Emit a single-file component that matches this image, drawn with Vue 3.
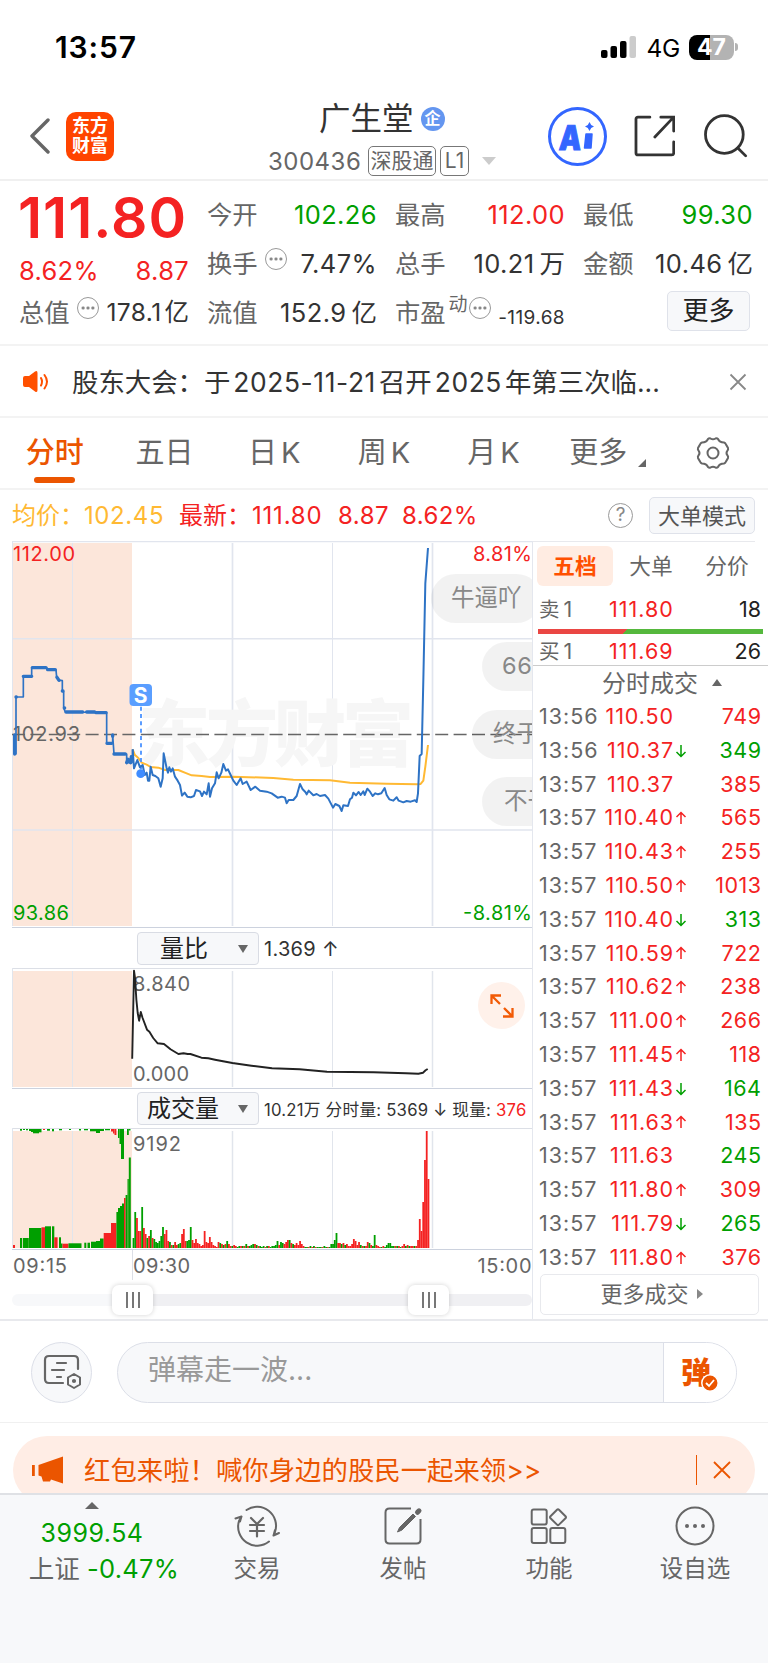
<template>
  <div class="stock-page">
    <!-- 状态栏 -->
    <div class="status-bar">
      <span class="clock">13:57</span>
      <div class="status-right">
        <svg class="signal" width="36" height="24" viewBox="0 0 36 24">
          <rect x="0" y="15" width="6.5" height="8" rx="2" fill="#000" />
          <rect x="9.5" y="11" width="6.5" height="12" rx="2" fill="#000" />
          <rect x="19" y="6" width="6.5" height="17" rx="2" fill="#000" />
          <rect x="28.5" y="1" width="6.5" height="22" rx="2" fill="#ccc" />
        </svg>
        <span class="network">4G</span>
        <div class="battery"><span>4</span><span>7</span></div>
        <div class="battery-nub"></div>
      </div>
    </div>

    <!-- 标题栏 -->
    <div class="nav-bar">
      <div class="nav-left">
        <svg width="22" height="36" viewBox="0 0 22 36">
          <path d="M20 2 L4 18 L20 34" fill="none" stroke="#666" stroke-width="3.4" stroke-linecap="round" stroke-linejoin="round" />
        </svg>
        <div class="logo"><span>东方</span><span>财富</span></div>
      </div>
      <div class="nav-title">
        <div class="name-row">
          <span class="stock-name">广生堂</span>
          <span class="corp-badge">企</span>
        </div>
        <div class="code-row">
          <span class="stock-code">300436</span>
          <span class="code-tag">深股通</span>
          <span class="code-tag l1">L1</span>
          <span class="down-arrow"></span>
        </div>
      </div>
      <div class="nav-actions">
        <div class="ai-btn">
          <span>A</span>
          <svg width="12" height="28" viewBox="0 0 12 28">
            <path d="M6.5 0 L8.2 3 L11 4.5 L8.2 6 L6.5 9 L4.8 6 L2 4.5 L4.8 3 Z" fill="#3366ff" />
            <path d="M3 12 L9 12 L8 26 L1.5 26 Z" fill="#3366ff" stroke="#3366ff" stroke-width="1.5" stroke-linejoin="round" />
          </svg>
        </div>
        <svg class="share" width="42" height="42" viewBox="0 0 42 42" fill="none" stroke="#333" stroke-width="2.8" stroke-linecap="round">
          <path d="M16 2 H4 Q2 2 2 4 V38 Q2 40 4 40 H38 Q40 40 40 38 V27" />
          <path d="M27 2 H40 V16 M39 3 L21 22" />
        </svg>
        <svg class="search" width="44" height="44" viewBox="0 0 44 44" fill="none" stroke="#333" stroke-width="2.8" stroke-linecap="round">
          <circle cx="20.5" cy="20.5" r="19" />
          <path d="M34 34 L42 42" />
        </svg>
      </div>
    </div>

    <!-- 行情 -->
    <div class="quote">
      <div class="price-block">
        <div class="big-price">111.80</div>
        <div class="change-row"><span>8.62%</span><span>8.87</span></div>
      </div>
      <div v-for="item in quoteItems" :key="item.label" class="quote-cell" :class="item.cls">
        <span class="quote-label">{{ item.label }}</span>
        <sup v-if="item.sup">{{ item.sup }}</sup>
        <i v-if="item.tip" class="tip-dot"></i>
        <span class="quote-value" :class="item.color">{{ item.value }}<em v-if="item.unit">{{ item.unit }}</em></span>
      </div>
      <div class="quote-cell quote-more"><button class="more-btn">更多</button></div>
    </div>

    <!-- 公告 -->
    <div class="notice">
      <svg width="28" height="24" viewBox="0 0 28 24">
        <path d="M1 8 Q1 6 3 6 H7 L13 1.5 Q15.5 0 15.5 3 V20 Q15.5 23 13 21.5 L7 17 H3 Q1 17 1 15 Z" fill="#ff5000" />
        <path d="M19 8 Q21 11.5 19 15.5 M22.500 5 Q27.5 11.5 22.5 18.500" fill="none" stroke="#ff5000" stroke-width="2" stroke-linecap="round" />
      </svg>
      <span class="notice-text">股东大会：于<em>2025-11-21</em>召开<em>2025</em>年第三次临...</span>
      <svg width="18" height="18" viewBox="0 0 18 18"><path d="M1.5 1.5 L16.5 16.5 M16.5 1.5 L1.5 16.5" stroke="#888" stroke-width="1.8" /></svg>
    </div>

    <!-- 周期切换 -->
    <div class="tabs">
      <div v-for="tab in tabs" :key="tab.name" class="tab" :class="{ active: tab.name === activeTab, last: tab.more }" @click="activeTab = tab.name">
        {{ tab.name }}<em v-if="tab.k">K</em><span v-if="tab.more" class="corner"></span>
      </div>
      <svg class="gear" width="34" height="34" viewBox="0 0 34 34" fill="none" stroke="#666" stroke-width="2">
        <path d="M12 3 Q13 2 14.5 2.5 Q17 4 19.5 2.5 Q21 2 22 3 Q23.5 6.5 28 6.5 Q29.5 7 30 8.5 L32 12 Q32.5 13.5 31.5 14.5 Q29.5 17 31.5 19.5 Q32.5 20.5 32 22 L30 25.5 Q29.5 27 28 27.5 Q23.5 27.5 22 31 Q21 32 19.5 31.5 Q17 30 14.5 31.5 Q13 32 12 31 Q10.5 27.5 6 27.5 Q4.5 27 4 25.5 L2 22 Q1.5 20.5 2.5 19.5 Q4.5 17 2.5 14.5 Q1.5 13.5 2 12 L4 8.5 Q4.5 7 6 6.5 Q10.5 6.5 12 3 Z" />
        <circle cx="17" cy="17" r="5.5" />
      </svg>
    </div>

    <div class="avg-bar">
      <span class="avg">均价：</span><span class="avg num-avg">102.45</span>
      <span class="latest">最新：</span><span class="latest n1">111.80</span><span class="latest n2">8.87</span><span class="latest n3">8.62%</span>
      <span class="help">?</span>
      <button class="mode-btn">大单模式</button>
    </div>

    <div class="main">
      <!-- 左侧图表 -->
      <div class="charts">
        <div class="price-chart">
          <svg width="520" height="387" viewBox="0 0 520 387">
            <rect x="0" y="2" width="120" height="383" fill="#fce6da" />
            <g stroke="#e1e5ee">
              <path d="M0 0.5 H520" stroke-width="1.5" />
              <path d="M0.5 0 V385 M60.500 2 V385" stroke-width="1" />
              <path d="M220.5 2 V385 M420.5 2 V385" stroke-width="1.7" />
              <path d="M320.5 2 V385" stroke-width="1" />
              <path d="M0 97.7 H520 M0 289 H520" stroke-width="1.6" />
            </g>
            <text x="126" y="219" class="watermark" textLength="276">东方财富</text>
            <path d="M0 193.5 H520" stroke="#666" stroke-width="1.3" stroke-dasharray="13 5.4" />
            <text x="1" y="20" class="axis red" textLength="62">112.00</text>
            <text x="520" y="20" class="axis red" text-anchor="end" textLength="59">8.81%</text>
            <text x="1" y="199.5" class="axis grey" textLength="67">102.93</text>
            <text x="1" y="379" class="axis green" textLength="56">93.86</text>
            <text x="520" y="379" class="axis green" text-anchor="end" textLength="69">-8.81%</text>
            <g transform="translate(-12 -11) scale(0.33333)" fill="none" stroke-linejoin="round">
              <path :d="toPath(avgLine)" stroke="#ffb933" stroke-width="6" />
              <path d="M423 530 V730" stroke="#4d94ff" stroke-width="5.5" stroke-dasharray="12 10" />
              <path :d="toPath(auctionLine)" stroke="#2e73c5" stroke-width="5" />
              <path :d="auctionDots" stroke="#2e73c5" stroke-width="10" stroke-linecap="round" />
              <path :d="toPath(priceLine)" stroke="#2e73c5" stroke-width="6" />
              <circle cx="422" cy="731" r="13" fill="#3f8cff" />
            </g>
            <rect x="117.5" y="143" width="22.5" height="22" rx="4" fill="#5a9eff" />
            <text x="128.7" y="161.5" class="sell-mark" text-anchor="middle">S</text>
          </svg>
          <span v-for="b in bubbles" :key="b.text" class="bubble" :class="b.cls">{{ b.text }}</span>
        </div>

        <div class="indicator">
          <div class="select"><span>量比</span><i></i></div>
          <span class="ind-value">1.369 ↑</span>
        </div>
        <div class="ratio-chart">
          <svg width="520" height="121" viewBox="0 0 520 121">
            <rect x="0" y="3" width="120" height="116" fill="#fce6da" />
            <path d="M0 0.5 H520" stroke="#dcdfe6" stroke-width="1" />
            <path d="M60.5 3 V119 M320.5 3 V119 M0.5 0 V119" stroke="#e1e5ec" stroke-width="1" />
            <path d="M220.5 3 V119 M420.5 3 V119" stroke="#e1e5ec" stroke-width="1.5" />
            <text x="121" y="22.5" class="axis grey" textLength="57">8.840</text>
            <text x="121" y="112.5" class="axis grey" textLength="56">0.000</text>
            <path :d="toPath(ratioLine)" fill="none" stroke="#222" stroke-width="1.9" stroke-linejoin="round" />
          </svg>
          <div class="expand">
            <svg width="24" height="24" viewBox="0 0 24 24" fill="none" stroke="#f25a05" stroke-width="2.3">
              <path d="M1.5 10 V1.5 H11 M2 2 L10 10 M22.5 14 V22.5 H13 M22 22 L14 14" />
            </svg>
          </div>
        </div>

        <div class="indicator second">
          <div class="select wide"><span>成交量</span><i></i></div>
          <span class="ind-small">10.21万 分时量: 5369 ↓ 现量: <b>376</b></span>
        </div>
        <div class="volume-chart">
          <svg width="520" height="153" viewBox="0 0 520 153">
            <rect x="0" y="3" width="120" height="117" fill="#fce6da" />
            <path d="M0 0.5 H520" stroke="#dcdfe6" stroke-width="1" />
            <path d="M60.5 3 V120 M320.5 3 V120 M0.5 0 V120" stroke="#e1e5ec" stroke-width="1" />
            <path d="M220.5 3 V120 M420.5 3 V120" stroke="#e1e5ec" stroke-width="1.5" />
            <rect v-for="(b, i) in topBars" :key="'t' + i" :x="b[0]" y="1" :width="b[1] - b[0]" :height="b[2]" :fill="b[3] ? RED : GREEN" />
            <rect v-for="(b, i) in auctionBars" :key="'a' + i" :x="b[0]" :y="120 - b[2]" :width="b[1] - b[0]" :height="b[2]" :fill="b[3] ? RED : GREEN" />
            <rect v-for="(v, i) in volumes" :key="'v' + i" :x="120.6 + i * 1.735" :y="120 - Math.abs(v)" width="1.8" :height="Math.abs(v)" :fill="v > 0 ? RED : GREEN" />
            <path d="M0 121.5 H520" stroke="#ccd2de" stroke-width="1.2" />
            <path d="M120.5 122 V152" stroke="#dcdfe6" stroke-width="1" />
            <text x="121" y="22.5" class="axis grey" textLength="48">9192</text>
            <text x="1" y="145" class="axis grey" textLength="54">09:15</text>
            <text x="121" y="145" class="axis grey" textLength="57">09:30</text>
            <text x="519.5" y="145" class="axis grey" text-anchor="end" textLength="54">15:00</text>
          </svg>
        </div>
        <div class="slider">
          <div class="handle left"><i></i><i></i><i></i></div>
          <div class="handle right"><i></i><i></i><i></i></div>
        </div>
      </div>

      <!-- 右侧盘口 -->
      <div class="order-panel">
        <div class="panel-tabs">
          <span class="on">五档</span><span>大单</span><span>分价</span>
        </div>
        <div class="level"><span class="side">卖<em>1</em></span><span class="lv-price">111.80</span><span class="lv-qty">18</span></div>
        <div class="ratio-bar"></div>
        <div class="level buy"><span class="side">买<em>1</em></span><span class="lv-price">111.69</span><span class="lv-qty">26</span></div>
        <div class="deal-head">分时成交<i></i></div>
        <div class="deals">
          <div v-for="(d, i) in deals" :key="i" class="deal">
            <span class="time">{{ d[0] }}</span>
            <span class="deal-price">{{ d[1] }}</span>
            <svg class="dir" width="12" height="14" viewBox="0 0 12 14" fill="none" stroke-width="1.5">
              <path v-if="d[2] === 1" d="M6 13 V1.5 M1.5 6 L6 1.5 L10.5 6" :stroke="RED" />
              <path v-if="d[2] === -1" d="M6 1 V12.5 M1.5 8 L6 12.5 L10.5 8" :stroke="GREEN" />
            </svg>
            <span class="qty" :class="d[4] ? 'red' : 'green'">{{ d[3] }}</span>
          </div>
        </div>
        <div class="more-deals">更多成交<i></i></div>
      </div>
    </div>

    <!-- 弹幕 -->
    <div class="danmu">
      <div class="danmu-setting">
        <svg width="38" height="36" viewBox="0 0 38 36" fill="none" stroke="#666" stroke-width="2.2" stroke-linecap="round">
          <path d="M35 15 V6 Q35 2 31 2 H6 Q2 2 2 6 V25 Q2 29 6 29 H20" />
          <path d="M14 9 H23 M9 16 H21 M14 23 H18" />
          <path d="M31 20 L37 23.5 V30.5 L31 34 L25 30.5 V23.5 Z" stroke-width="2" stroke-linejoin="round" />
          <circle cx="31" cy="27" r="1" fill="#666" />
        </svg>
      </div>
      <div class="danmu-input">
        <span class="placeholder">弹幕走一波...</span>
        <div class="danmu-switch">
          <span>弹</span>
          <svg width="18" height="18" viewBox="0 0 18 18">
            <circle cx="9" cy="9" r="8.2" fill="#eb5500" stroke="#fff" stroke-width="1.5" />
            <path d="M5 9 L8 12 L13 6" fill="none" stroke="#fff" stroke-width="1.8" />
          </svg>
        </div>
      </div>
    </div>

    <div class="promo-wrap">
      <div class="promo">
        <svg width="32" height="28" viewBox="0 0 32 28" fill="#eb5500">
          <rect x="0" y="9" width="2.8" height="11" />
          <path d="M6.5 9 L31 0.5 V27.5 L19 23.5 L18 25.5 H11 L9.5 20.5 L6.5 19.5 Z" />
        </svg>
        <span class="promo-text">红包来啦！喊你身边的股民一起来领&gt;&gt;</span>
        <span class="promo-line"></span>
        <svg width="18" height="18" viewBox="0 0 18 18"><path d="M1 1 L17 17 M17 1 L1 17" stroke="#eb5500" stroke-width="1.8" /></svg>
      </div>
    </div>

    <!-- 底部导航 -->
    <div class="bottom-bar">
      <div class="index">
        <i></i>
        <div class="index-value">3999.54</div>
        <div class="index-row">上证<span>-0.47%</span></div>
      </div>
      <div class="nav-item">
        <svg width="46" height="42" viewBox="0 0 46 42" fill="none" stroke="#666" stroke-width="2" stroke-linecap="round" stroke-linejoin="round">
          <path d="M12.5 5 A19 19 0 0 1 41 27 L39.5 30.500 M45 28 L39.5 30.5 L41 25" />
          <path d="M35 36.500 A19 19 0 0 1 5 16 L7.5 11.5 M1.5 13.5 L7.5 11.5 L6 16.5" />
          <path d="M17 13 L23 19 L29 13 M23 19 V31.5 M16 20 H30 M16 26 H30" stroke-width="2.2" />
        </svg>
        <span>交易</span>
      </div>
      <div class="nav-item">
        <svg width="46" height="42" viewBox="0 0 46 42" fill="none" stroke="#666" stroke-width="2">
          <path d="M31 3.5 H9.5 Q5.5 3.5 5.5 7.5 V34.5 Q5.5 38.5 9.5 38.5 H36.5 Q40.5 38.5 40.5 34.5 V14" />
          <path d="M17.5 27 L19.5 22.5 L33 9 L35.5 11.5 L22 25 Z" fill="#666" stroke-width="1" />
          <path d="M37.5 7.3 L39 5.8" stroke-width="5" stroke-linecap="round" />
        </svg>
        <span>发帖</span>
      </div>
      <div class="nav-item">
        <svg width="46" height="42" viewBox="0 0 46 42" fill="none" stroke="#666" stroke-width="2">
          <rect x="5.7" y="4.5" width="15" height="15" rx="2" />
          <rect x="5.7" y="23" width="15" height="15" rx="2" />
          <rect x="24.3" y="23" width="15" height="15" rx="2" />
          <path d="M31 4.8 Q32 3.8 33 4.8 L39.5 11.2 Q40.5 12.2 39.5 13.2 L33 19.6 Q32 20.6 31 19.6 L24.5 13.2 Q23.5 12.2 24.5 11.2 Z" />
        </svg>
        <span>功能</span>
      </div>
      <div class="nav-item">
        <svg width="46" height="42" viewBox="0 0 46 42">
          <circle cx="23" cy="21" r="18.5" fill="none" stroke="#666" stroke-width="2" />
          <g fill="#666"><circle cx="15" cy="21" r="2" /><circle cx="23" cy="21" r="2" /><circle cx="31" cy="21" r="2" /></g>
        </svg>
        <span>设自选</span>
      </div>
    </div>
  </div>
</template>

<script setup>
import { ref } from 'vue'

const RED = '#f42222'
const GREEN = '#009f00'

const quoteItems = [
  { label: '今开', value: '102.26', color: 'green' },
  { label: '最高', value: '112.00', color: 'red' },
  { label: '最低', value: '99.30', color: 'green' },
  { label: '换手', value: '7.47%', tip: true },
  { label: '总手', value: '10.21', unit: '万' },
  { label: '金额', value: '10.46', unit: '亿' },
  { label: '总值', value: '178.1', unit: '亿', tip: true, cls: 'tight' },
  { label: '流值', value: '152.9', unit: '亿' },
  { label: '市盈', value: '-119.68', sup: '动', tip: true, cls: 'small' }
]

const tabs = [
  { name: '分时' },
  { name: '五日' },
  { name: '日', k: true },
  { name: '周', k: true },
  { name: '月', k: true },
  { name: '更多', more: true }
]
const activeTab = ref('分时')

const bubbles = [
  { text: '牛逼吖', cls: 'b1' },
  { text: '666', cls: 'b2' },
  { text: '终于', cls: 'b3' },
  { text: '不干', cls: 'b4' }
]

// 时间 价格 方向 手数 是否红色
const deals = [
  ['13:56', '110.50', 0, 749, 1],
  ['13:56', '110.37', -1, 349, 0],
  ['13:57', '110.37', 0, 385, 1],
  ['13:57', '110.40', 1, 565, 1],
  ['13:57', '110.43', 1, 255, 1],
  ['13:57', '110.50', 1, 1013, 1],
  ['13:57', '110.40', -1, 313, 0],
  ['13:57', '110.59', 1, 722, 1],
  ['13:57', '110.62', 1, 238, 1],
  ['13:57', '111.00', 1, 266, 1],
  ['13:57', '111.45', 1, 118, 1],
  ['13:57', '111.43', -1, 164, 0],
  ['13:57', '111.63', 1, 135, 1],
  ['13:57', '111.63', 0, 245, 0],
  ['13:57', '111.80', 1, 309, 1],
  ['13:57', '111.79', -1, 265, 0],
  ['13:57', '111.80', 1, 376, 1]
]

// 集合竞价
const auctionLine = [44, 672, 48, 672, 48, 501, 70, 501, 70, 439, 95, 439, 95, 413, 140, 414, 146, 419, 168, 420, 170, 442, 176, 450, 187, 452, 187, 483, 191, 485, 191, 534, 196, 546, 320, 547, 320, 640, 338, 640, 338, 615, 342, 672, 380, 672, 380, 698, 396, 698, 398, 658]
const auctionDots = 'M44 615 V672 M48 501 h1 M70 439 H95 M97 413 H138 M143 419 H166 M171 442 L177 451 M187 483 h2 M193 534 h1 M198 546 H248 M260 546 H284 M288 548 H318 M321 640 H335 M338 615 v4 M342 672 H376 M380 698 L384 688 L392 698 L394 680'

const priceLine = [398, 658, 402, 715, 412, 690, 420, 712, 428, 705, 434, 735, 440, 728, 444, 752, 448, 752, 452, 710, 458, 735, 466, 738, 475, 745, 482, 770, 488, 745, 491, 670, 500, 715, 504, 728, 508, 712, 513, 725, 518, 715, 525, 740, 533, 752, 540, 765, 546, 797, 554, 788, 562, 800, 572, 802, 582, 798, 588, 780, 600, 784, 606, 798, 612, 785, 620, 793, 626, 760, 630, 800, 636, 775, 645, 760, 650, 727, 656, 745, 664, 728, 670, 702, 678, 722, 684, 718, 692, 735, 700, 752, 710, 765, 722, 745, 728, 762, 740, 755, 752, 780, 766, 770, 780, 782, 800, 785, 815, 790, 833, 803, 845, 800, 855, 803, 860, 820, 866, 810, 880, 810, 890, 798, 895, 780, 900, 762, 908, 778, 916, 786, 920, 793, 926, 782, 940, 796, 950, 792, 960, 798, 975, 795, 985, 806, 999, 833, 1006, 822, 1018, 828, 1025, 843, 1030, 826, 1044, 828, 1050, 808, 1056, 803, 1060, 788, 1068, 796, 1076, 786, 1082, 795, 1090, 784, 1094, 795, 1102, 776, 1110, 785, 1118, 798, 1126, 790, 1134, 793, 1144, 790, 1154, 774, 1160, 795, 1168, 808, 1180, 812, 1190, 802, 1196, 812, 1210, 817, 1220, 813, 1232, 815, 1245, 811, 1250, 816, 1254, 790, 1259, 678, 1265, 672, 1270, 450, 1276, 160, 1284, 54]

const avgLine = [398, 658, 404, 674, 415, 684, 425, 698, 440, 704, 452, 711, 475, 713, 495, 720, 535, 720, 560, 730, 575, 736, 605, 738, 630, 741, 700, 740, 820, 744, 880, 749, 990, 751, 1050, 758, 1160, 761, 1250, 763, 1262, 762, 1270, 752, 1276, 710, 1284, 645]

const ratioLine = [120.2, 90.7, 122, 2.7, 123, 10, 124.4, 32, 125.7, 45, 127.1, 52.7, 128.8, 44, 130.6, 50, 135, 61.7, 137.4, 63.7, 141.2, 70, 145.7, 75.3, 152, 76, 158.5, 81.3, 166.4, 86, 171.5, 85.3, 175.7, 86, 178.4, 86, 189.4, 89.7, 196.3, 90.3, 203, 91.7, 220.4, 95, 239.4, 97.7, 260, 100.3, 287.6, 101.3, 315, 103.7, 361.6, 104.3, 394, 105.3, 406.4, 105.7, 411, 104.7, 413.6, 102.3, 415.7, 101]

// 起点 终点 高度 红/绿
const auctionBars = [
  [1, 3, 3, 1], [8, 10.2, 10, 0], [11, 16.8, 10, 0], [17, 29.5, 20, 0], [29.5, 33, 20.7, 1], [33, 39, 21.7, 0], [40, 42.3, 21.7, 0],
  [42.3, 45.6, 10.7, 1], [47, 49, 10.7, 0], [49, 50.5, 4.5, 0], [50.5, 56.5, 4.3, 1], [56.5, 69.5, 4.7, 0], [72.3, 74.3, 5.3, 0], [75.5, 78, 5.3, 0],
  [79, 84, 6.3, 0], [84, 88, 7, 0], [88, 91.7, 9.5, 0], [91.7, 99, 15, 1], [99, 104.4, 25, 1], [104.4, 106, 36, 0], [106, 108, 40, 0], [108, 110, 42, 0], [110, 112, 44.5, 0],
  [112, 113.6, 50, 1], [113.6, 115.5, 53, 0], [115.5, 116.8, 69, 0], [116.8, 118.8, 90.5, 0]
]
const topBars = [
  [8, 10, 1.7, 0], [11, 13, 1, 0], [14, 16, 1.3, 0], [17, 19, 2, 0], [19, 21, 3, 0], [21, 27, 4.3, 0], [27, 29.5, 3.3, 0], [31, 33, 1, 1], [35, 38, 1.7, 0], [40, 42, 2.3, 0],
  [47, 50, 1.3, 0], [57, 59, 1, 0], [67, 69, 1.5, 0], [72, 76, 1.3, 0], [78, 84, 2.3, 0], [84, 88, 4, 0], [88, 92, 2, 0], [93, 98, 1.3, 0],
  [99, 101, 2.5, 1], [101, 102.5, 4.5, 1], [102.5, 104.4, 6, 1], [106, 107.5, 9, 0], [107.5, 109, 15, 0], [109, 112, 30, 0], [115, 116.8, 6, 0], [116.8, 118.5, 1.5, 0]
]
// 分时量，正数为红，负数为绿
const volumes = [
  -10, -36, 30, 17, 17, -41, 20, 14, -10, 12, -18, 10, -9, -6, -5, -7, -12, -21, 14, 18, 7, -6, 3, -3, 6, 3, -4, -5, 14, 19, 7, -7, -8, -21, 8, 5, 9, 5, 4, 2, 3, 17, 6, 5, 11, 6, 3,
  2, 1, 6, -5, 4, -3, 4, -7, 4, 2, -2, 3, 2, -1, -2, 2, -2, 2, -4, 2, -2, -3, -4, 4, -3, 2, -2, -1, -2, 1, -2, 2, -1, -2, -2, -3, -7, 3, -6, -5, 4, 6, 8, -8, 5, -4, 3, 5, 3, 7, 4, 2,
  -1, -1, 1, -2, 1, -2, 1, -1, -1, -1, 1, -2, -1, 1, -1, -4, -4, -8, -15, 5, 5, -4, 5, -3, 4, 2, 2, 4, 9, 7, 3, 6, -3, 2, -2, 2, 6, -5, 3, -2, -13, 3, 2, 1, -1, 2, -1, -3, -5, -5, -2, -2, 2, -2,
  2, -1, 2, 4, -2, 3, -2, 2, 2, -2, 2, 8, 29, 17, 46, 88, 117, 69
]

function toPath(points) {
  let d = ''
  for (let i = 0; i < points.length; i += 2) {
    d += (i ? 'L' : 'M') + points[i] + ' ' + points[i + 1]
  }
  return d
}
</script>

<style>
body {
  margin: 0;
  background: #fff;
}
</style>

<style scoped>
.stock-page {
  width: 768px;
  height: 1663px;
  overflow: hidden;
  background: #fff;
  color: #333;
  font-family: Inter, "Noto Sans CJK SC", sans-serif;
  display: flex;
  flex-direction: column;
}

.stock-page > div {
  flex: none;
  box-sizing: border-box;
}

em, i, b {
  font-style: normal;
  font-weight: inherit;
}

button {
  font-family: inherit;
  padding: 0;
}

.red { color: #f42222; fill: #f42222; }
.green { color: #009f00; fill: #009f00; }
.grey { fill: #666; }

/* 状态栏 */
.status-bar {
  height: 93px;
  padding: 1px 30px 0 55px;
  display: flex;
  align-items: center;
  justify-content: space-between;
}

.clock {
  font-size: 30px;
  font-weight: 600;
  letter-spacing: 0.9px;
  color: #000;
}

.status-right {
  display: flex;
  align-items: center;
}

.network {
  margin: 2px 9px 0;
  font-size: 24.5px;
  letter-spacing: -0.3px;
  color: #000;
}

.battery {
  width: 45px;
  height: 25px;
  border-radius: 8px;
  background: linear-gradient(90deg, #000 0 21px, #b3b3b3 21px);
  color: #fff;
  font-size: 23px;
  font-weight: 700;
  line-height: 25px;
  text-align: center;
}

.battery-nub {
  width: 3px;
  height: 8px;
  margin-left: 1px;
  border-radius: 0 3px 3px 0;
  background: #b3b3b3;
}

/* 标题栏 */
.nav-bar {
  height: 88px;
  padding: 0 20px 0 28px;
  display: grid;
  grid-template-columns: 200px 1fr 200px;
  border-bottom: 2px solid #f0f0f0;
}

.nav-left {
  display: flex;
  align-items: center;
  gap: 16px;
  padding-bottom: 4px;
}

.logo {
  width: 48px;
  height: 49px;
  border-radius: 10px;
  background: #ff4400;
  color: #fff;
  display: flex;
  flex-direction: column;
  align-items: center;
  justify-content: center;
  font-size: 18px;
  line-height: 20px;
  font-weight: 700;
}

.nav-title {
  display: flex;
  flex-direction: column;
  padding-top: 6px;
}

.name-row {
  display: flex;
  align-items: center;
  gap: 7px;
  padding-left: 91px;
  height: 40px;
}

.stock-name {
  font-size: 31.5px;
  line-height: 40px;
  white-space: nowrap;
}

.corp-badge {
  width: 24px;
  height: 24px;
  border-radius: 50%;
  background: #6496f0;
  color: #fff;
  font-size: 16px;
  line-height: 23px;
  text-align: center;
  font-weight: 700;
}

.code-row {
  display: flex;
  align-items: center;
  height: 44px;
  padding-left: 40px;
  color: #666;
}

.stock-code {
  font-size: 24px;
  letter-spacing: 0.5px;
  width: 100px;
  white-space: nowrap;
}

.code-tag {
  box-sizing: border-box;
  width: 68px;
  height: 30px;
  border: 1.5px solid #777;
  border-radius: 5px;
  font-size: 21px;
  line-height: 27px;
  text-align: center;
  white-space: nowrap;
  flex: none;
}

.code-tag.l1 {
  width: 29px;
  margin-left: 4px;
}

.down-arrow {
  margin-left: 13px;
  border: 7.5px solid transparent;
  border-top: 8px solid #ccc;
  border-bottom: 0;
}

.nav-actions {
  display: flex;
  align-items: center;
  justify-content: flex-end;
  padding-bottom: 4px;
}

.ai-btn {
  box-sizing: border-box;
  width: 59px;
  height: 59px;
  border: 3px solid #3366ff;
  border-radius: 50%;
  display: flex;
  align-items: center;
  justify-content: center;
  gap: 2px;
  color: #3366ff;
}

.ai-btn span {
  font-size: 34px;
  font-weight: 900;
  line-height: 44px;
  transform: skewX(-4deg) scaleX(0.82);
  margin: 3px -3px 0 -3px;
  -webkit-text-stroke: 1px #3366ff;
}

.share {
  margin-left: 27px;
}

.search {
  margin-left: 29px;
}

/* 行情 */
.quote {
  height: 165px;
  padding: 9px 0 0 19px;
  display: grid;
  grid-template-columns: repeat(4, 170px);
  grid-template-rows: repeat(3, 49px);
  column-gap: 18px;
  border-bottom: 2px solid #f3f3f3;
}

.price-block {
  grid-row: span 2;
  color: #f42222;
}

.big-price {
  height: 56px;
  font-size: 57px;
  line-height: 56px;
  font-weight: 600;
  letter-spacing: 1px;
  margin-left: -1px;
}

.change-row {
  display: flex;
  justify-content: space-between;
  font-size: 25.5px;
  line-height: 50px;
  letter-spacing: 0.3px;
}

.quote-cell {
  display: flex;
  align-items: center;
  height: 49px;
  white-space: nowrap;
  line-height: 49px;
}

.quote-label {
  font-size: 25.3px;
  color: #666;
}

.quote-value {
  margin-left: auto;
  font-size: 25.5px;
  letter-spacing: 0.4px;
}

.quote-value em {
  margin-left: 5px;
  letter-spacing: 0;
}

.tip-dot {
  box-sizing: border-box;
  width: 22px;
  height: 22px;
  margin: 0 0 9px 7px;
  border: 1.6px solid #999;
  border-radius: 50%;
  background: radial-gradient(circle, #888 1.3px, transparent 1.9px) center / 4.9px 20px repeat-x content-box;
  padding: 0 2px;
}

.quote-cell sup {
  font-size: 19px;
  line-height: 20px;
  margin: 0 0 16px 3px;
  color: #666;
}

.tight .quote-value {
  font-size: 24.5px;
}

.tight .quote-value em {
  margin-left: 3px;
}

.small .tip-dot {
  margin-left: 1px;
}

.small .quote-value {
  font-size: 19px;
  padding-top: 9px;
}

.quote-more {
  justify-content: flex-end;
}

.more-btn {
  width: 83px;
  height: 40px;
  margin: 0 3px 4px 0;
  border: 1.5px solid #dfe2ea;
  border-radius: 5px;
  background: #f7f8fa;
  color: #222;
  font-size: 26px;
  line-height: 36px;
}

/* 公告 */
.notice {
  height: 72px;
  padding: 1px 21px 0 22px;
  display: flex;
  align-items: center;
  border-bottom: 2px solid #f3f3f3;
}

.notice-text {
  flex: 1;
  margin-left: 22px;
  font-size: 26.4px;
  line-height: 60px;
  white-space: nowrap;
}

.notice-text em {
  margin: 0 3px;
  letter-spacing: 0.6px;
}

/* tabs */
.tabs {
  height: 72px;
  display: flex;
  align-items: center;
  border-bottom: 2px solid #f3f3f3;
}

.tab {
  position: relative;
  box-sizing: border-box;
  width: 109.7px;
  height: 70px;
  text-align: center;
  font-size: 29px;
  line-height: 69px;
  color: #666;
  white-space: nowrap;
}

.tab em {
  margin-left: 4px;
}

.tab.last {
  padding-right: 10px;
}

.tab.active {
  color: #eb5500;
  font-weight: 500;
}

.tab.active::after {
  content: "";
  position: absolute;
  left: 34px;
  bottom: 5px;
  width: 41px;
  height: 6px;
  border-radius: 3px;
  background: #eb5500;
}

.corner {
  position: absolute;
  right: 12px;
  bottom: 21px;
  border-left: 8px solid transparent;
  border-bottom: 8px solid #666;
}

.gear {
  margin-left: 38px;
}

/* 均价 */
.avg-bar {
  height: 51px;
  padding: 0 13px 0 12px;
  display: flex;
  align-items: center;
  font-size: 24px;
  line-height: 50px;
  white-space: nowrap;
}

.avg { color: #ffb933; }
.latest { color: #f42222; }
.num-avg { width: 95px; letter-spacing: 0.6px; }
.n1 { width: 86px; margin-left: 1px; letter-spacing: 0.8px; }
.n2 { width: 64px; letter-spacing: 0.5px; }
.n3 { letter-spacing: 0.4px; }

.help {
  box-sizing: border-box;
  margin-left: auto;
  width: 25px;
  height: 25px;
  border: 1.6px solid #999;
  border-radius: 50%;
  font-size: 19px;
  line-height: 22px;
  text-align: center;
  color: #888;
}

.mode-btn {
  width: 106px;
  height: 37px;
  margin-left: 16px;
  border: 1.5px solid #dfe2ea;
  border-radius: 5px;
  background: #f7f8fa;
  color: #555;
  font-size: 22px;
  line-height: 32px;
}

/* 图表 */
.main {
  height: 780px;
  display: flex;
  border-bottom: 2px solid #e8e9ed;
}

.charts {
  width: 520px;
  padding-left: 12px;
  height: 778px;
  flex: none;
}

.charts svg {
  display: block;
}

.price-chart {
  position: relative;
  height: 386px;
  overflow: hidden;
  border-bottom: 1.5px solid #ccd2de;
}

.axis {
  font-size: 20px;
}

.watermark {
  font-size: 72px;
  font-weight: 900;
  fill: #f6f6f6;
}

.sell-mark {
  font-size: 21px;
  font-weight: 700;
  fill: #fff;
}

.bubble {
  position: absolute;
  box-sizing: border-box;
  height: 49px;
  border-radius: 25px;
  background: rgba(0, 0, 0, 0.05);
  color: #888;
  font-size: 23.5px;
  line-height: 48px;
  padding: 0 20px;
  white-space: nowrap;
}

.b1 { left: 419px; top: 33px; width: 110px; }
.b2 { left: 470px; top: 101px; letter-spacing: 0.6px; }
.b3 { left: 460px; top: 169px; padding-left: 21px; }
.b4 { left: 470px; top: 236px; padding-left: 22px; }

.indicator {
  height: 40px;
  display: flex;
  align-items: center;
  padding: 1px 0 0 125px;
  box-sizing: border-box;
  white-space: nowrap;
}

.indicator.second {
  height: 40px;
  padding-top: 0;
  border-top: 1.5px solid #ccd2de;
}

.select {
  box-sizing: border-box;
  width: 122px;
  height: 33px;
  border: 1.5px solid #d9dce4;
  border-radius: 4px;
  background: #f7f8fa;
  display: flex;
  align-items: center;
  justify-content: space-between;
  padding: 0 10px 0 22px;
  font-size: 24px;
  line-height: 30px;
  color: #222;
}

.select.wide {
  padding-left: 9px;
}

.select i {
  border: 5px solid transparent;
  border-top: 8px solid #666;
  border-bottom: 0;
}

.ind-value {
  margin-left: 5px;
  font-size: 20px;
  letter-spacing: 0.3px;
}

.ind-small {
  margin-left: 5px;
  font-size: 16.7px;
  letter-spacing: 0.22px;
}

.ind-small b {
  color: #f42222;
}

.ratio-chart {
  position: relative;
  height: 120px;
}

.expand {
  position: absolute;
  right: 7px;
  top: 14px;
  width: 47px;
  height: 47px;
  border-radius: 50%;
  background: #fff1ea;
  display: flex;
  align-items: center;
  justify-content: center;
}

.volume-chart {
  height: 153px;
}

.slider {
  position: relative;
  height: 12px;
  margin-top: 13px;
  border-radius: 6px;
  background: linear-gradient(90deg, #f7f8fa 0 120px, #f0f0f3 120px);
}

.handle {
  position: absolute;
  top: -9px;
  width: 41px;
  height: 30px;
  border-radius: 7px;
  background: #fff;
  box-shadow: 0 0 5px rgba(0, 0, 0, 0.18);
  display: flex;
  align-items: center;
  justify-content: center;
  gap: 4px;
}

.handle i {
  width: 2px;
  height: 16px;
  background: #777;
}

.handle.left { left: 100px; }
.handle.right { left: 396px; }

/* 盘口 */
.order-panel {
  width: 236px;
  height: 778px;
  box-sizing: border-box;
  border-left: 1.5px solid #e4e7ee;
}

.panel-tabs {
  display: flex;
  height: 49px;
  padding: 4px 0 0 4px;
  box-sizing: border-box;
  border-top: 1.5px solid #e8e9ed;
  width: 222px;
  white-space: nowrap;
}

.panel-tabs span {
  flex: none;
  width: 76px;
  height: 40px;
  border-radius: 6px;
  font-size: 21.7px;
  line-height: 40px;
  text-align: center;
  color: #666;
}

.panel-tabs .on {
  background: #ffece2;
  color: #ff5000;
  font-weight: 700;
}

.level {
  display: flex;
  height: 39px;
  line-height: 39px;
  padding: 0 7px 0 6px;
  font-size: 21.5px;
}

.side {
  width: 70px;
  color: #666;
  font-size: 20.5px;
}

.side em {
  margin-left: 4px;
  font-size: 21.5px;
}

.lv-price {
  color: #f42222;
  letter-spacing: 1px;
}

.lv-qty {
  margin-left: auto;
  color: #222;
}

.ratio-bar {
  height: 5px;
  margin: 0 5px 0 5px;
  background: linear-gradient(135deg, #ea4643 0 63px, #55b83d 63px);
}

.level.buy {
  height: 31px;
  line-height: 34px;
  border-bottom: 1.5px solid #ccc;
}

.deal-head {
  height: 34px;
  line-height: 36px;
  padding-left: 69px;
  font-size: 24px;
  color: #666;
}

.deal-head i {
  display: inline-block;
  margin: 0 0 6px 14px;
  border: 5.5px solid transparent;
  border-bottom: 7px solid #666;
  border-top: 0;
}

.deal {
  height: 33.8px;
  line-height: 33.8px;
  display: flex;
  align-items: center;
  padding: 0 6.5px 0 6px;
  font-size: 21.5px;
}

.time {
  width: 60px;
  letter-spacing: 1px;
  color: #666;
}

.deal-price {
  width: 75px;
  text-align: right;
  letter-spacing: 0.9px;
  color: #f42222;
}

.dir {
  margin-left: 1px;
}

.qty {
  margin-left: auto;
  letter-spacing: 0.5px;
}

.more-deals {
  box-sizing: border-box;
  width: 219px;
  height: 41px;
  margin: -1px 0 0 7px;
  padding-left: 4px;
  border: 1.5px solid #e8e9ed;
  border-radius: 5px;
  text-align: center;
  font-size: 22px;
  line-height: 38px;
  color: #666;
}

.more-deals i {
  display: inline-block;
  margin: 0 0 3px 8px;
  border: 5.5px solid transparent;
  border-left: 6px solid #888;
  border-right: 0;
}

/* 弹幕 */
.danmu {
  height: 102px;
  display: flex;
  align-items: center;
  padding: 1px 0 0 31px;
  border-bottom: 1.5px solid #f0f0f0;
}

.danmu-setting {
  box-sizing: border-box;
  width: 61px;
  height: 61px;
  border: 1.5px solid #dcdfe8;
  border-radius: 50%;
  background: #f7f8fa;
  display: flex;
  align-items: center;
  justify-content: center;
}

.danmu-input {
  box-sizing: border-box;
  width: 620px;
  height: 61px;
  margin-left: 25px;
  border: 1.5px solid #dcdfe8;
  border-radius: 31px;
  background: #f7f8fa;
  overflow: hidden;
  display: flex;
  justify-content: space-between;
}

.placeholder {
  padding-left: 30px;
  font-size: 28px;
  line-height: 54px;
  color: #999;
}

.danmu-switch {
  width: 72px;
  background: #fff;
  border-left: 1.5px solid #dcdfe8;
  display: flex;
  align-items: center;
  color: #eb5500;
  font-size: 30px;
  font-weight: 900;
}

.danmu-switch span {
  margin-left: 17px;
  line-height: 56px;
}

.danmu-switch svg {
  margin: 22px 0 0 -10px;
}

/* 红包 */
.promo-wrap {
  height: 70px;
  padding: 13px 13px 0;
  overflow: hidden;
}

.promo {
  height: 68px;
  border-radius: 34px;
  background: #ffede5;
  display: flex;
  align-items: center;
  padding: 0 24px 0 19px;
  color: #eb5500;
}

.promo-text {
  margin-left: 20px;
  font-size: 26.4px;
  line-height: 60px;
  white-space: nowrap;
}

.promo-line {
  width: 1.5px;
  height: 30px;
  margin: 0 16px 0 auto;
  background: #eb5500;
}

/* 底部 */
.bottom-bar {
  height: 170px;
  border-top: 2px solid #dfe1e5;
  background: #f7f8fa;
  display: flex;
}

.index {
  width: 184px;
  text-align: center;
  color: #666;
}

.index i {
  display: block;
  width: 0;
  margin: 7px auto 0;
  border: 7px solid transparent;
  border-bottom: 7px solid #666;
  border-top: 0;
}

.index-value {
  height: 40px;
  line-height: 40px;
  font-size: 25px;
  letter-spacing: 0.5px;
  color: #009f00;
  margin-top: 4px;
}

.index-row {
  margin-left: 24px;
  font-size: 25.5px;
  line-height: 32px;
  white-space: nowrap;
}

.index-row span {
  margin-left: 7px;
  letter-spacing: 0.3px;
  color: #009f00;
}

.nav-item {
  width: 146px;
  padding-top: 10px;
  display: flex;
  flex-direction: column;
  align-items: center;
  font-size: 23.5px;
  line-height: 44px;
  color: #666;
}
</style>
